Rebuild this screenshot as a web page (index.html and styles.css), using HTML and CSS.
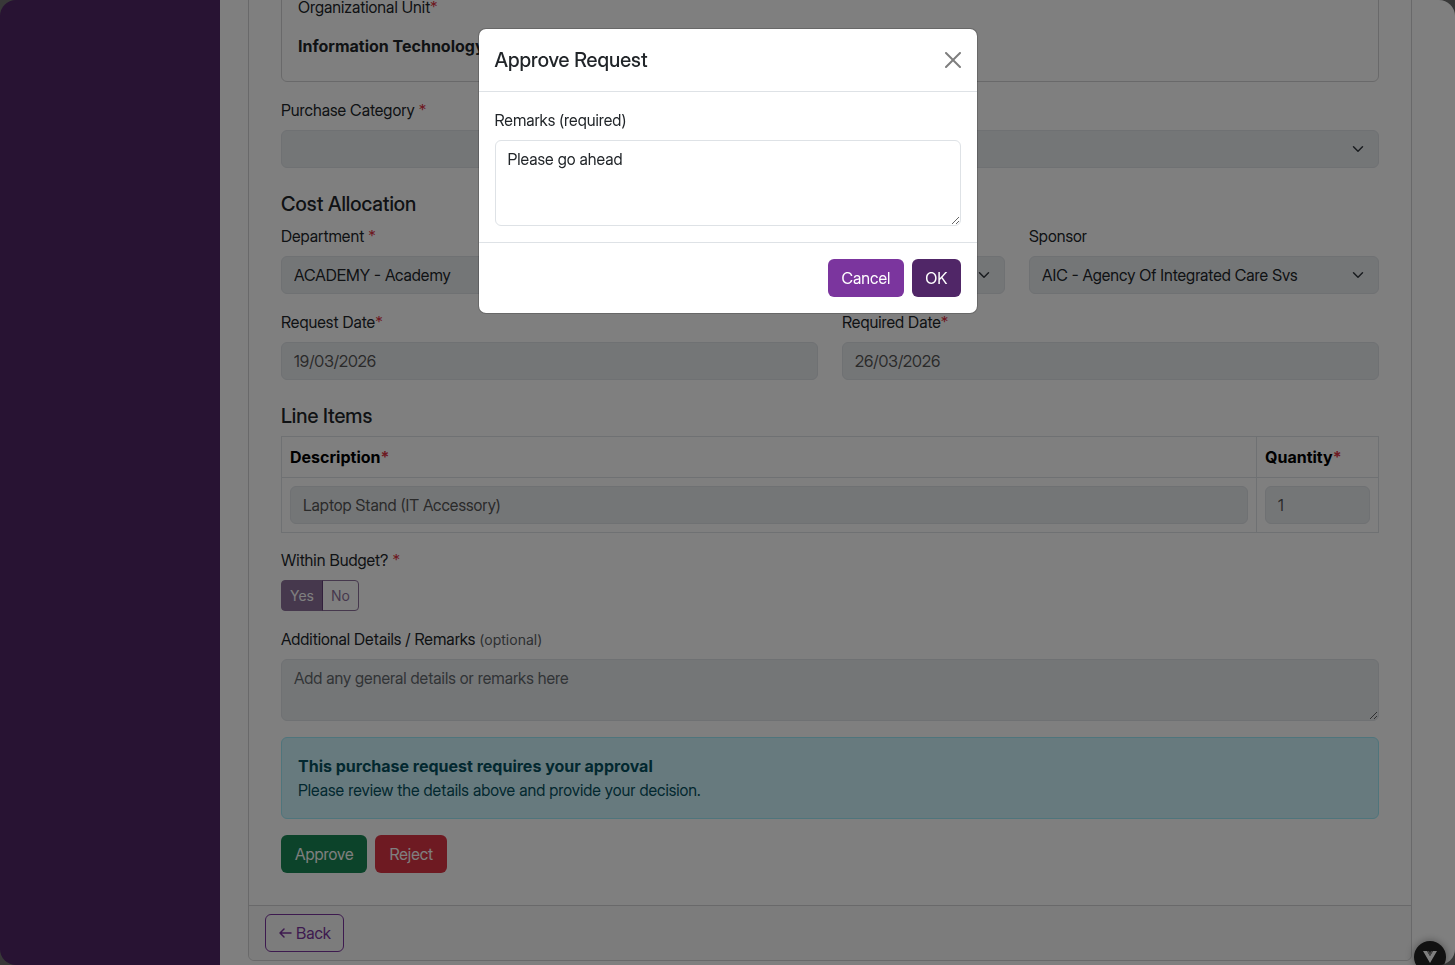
FILE: index.html
```html
<!DOCTYPE html>
<html lang="en">
<head>
    <meta charset="UTF-8">
    <meta name="viewport" content="width=device-width, initial-scale=1.0">
    <title>Purchase Request</title>
    <link rel="stylesheet" href="styles.css">
</head>
<body>
    <div class="layout">
        <aside class="sidebar"></aside>

        <main class="content">
            <div class="card">
                <form class="card-body">
                    <div class="panel">
                        <div class="label">Organizational Unit<span class="req">*</span></div>
                        <div class="plaintext">Information Technology</div>
                    </div>

                    <div class="field">
                        <label for="category">Purchase Category <span class="req">*</span></label>
                        <select id="category" class="control" disabled><option></option></select>
                    </div>

                    <h2>Cost Allocation</h2>
                    <div class="row three">
                        <div class="field">
                            <label for="department">Department <span class="req">*</span></label>
                            <select id="department" class="control" disabled><option>ACADEMY - Academy</option></select>
                        </div>
                        <div class="field">
                            <label for="costCentre">Cost Centre <span class="req">*</span></label>
                            <select id="costCentre" class="control" disabled><option></option></select>
                        </div>
                        <div class="field">
                            <label for="sponsor">Sponsor</label>
                            <select id="sponsor" class="control" disabled><option>AIC - Agency Of Integrated Care Svs</option></select>
                        </div>
                    </div>
                    <div class="row two">
                        <div class="field">
                            <label for="requestDate">Request Date<span class="req">*</span></label>
                            <input type="text" id="requestDate" class="control" value="19/03/2026" disabled>
                        </div>
                        <div class="field">
                            <label for="requiredDate">Required Date<span class="req">*</span></label>
                            <input type="text" id="requiredDate" class="control" value="26/03/2026" disabled>
                        </div>
                    </div>

                    <h2>Line Items</h2>
                    <table class="items">
                        <thead>
                            <tr>
                                <th>Description<span class="req">*</span></th>
                                <th class="qty">Quantity<span class="req">*</span></th>
                            </tr>
                        </thead>
                        <tbody>
                            <tr>
                                <td><input type="text" class="control" aria-label="Description" value="Laptop Stand (IT Accessory)" disabled></td>
                                <td><input type="text" class="control" aria-label="Quantity" value="1" disabled></td>
                            </tr>
                        </tbody>
                    </table>

                    <div class="field">
                        <div class="label">Within Budget? <span class="req">*</span></div>
                        <div class="toggle">
                            <input type="radio" name="budget" id="budgetYes" checked disabled>
                            <label for="budgetYes">Yes</label>
                            <input type="radio" name="budget" id="budgetNo" disabled>
                            <label for="budgetNo">No</label>
                        </div>
                    </div>

                    <div class="field">
                        <label for="details">Additional Details / Remarks <small>(optional)</small></label>
                        <textarea id="details" class="control" rows="2" placeholder="Add any general details or remarks here" disabled></textarea>
                    </div>

                    <div class="alert">
                        <strong>This purchase request requires your approval</strong><br>
                        Please review the details above and provide your decision.
                    </div>

                    <div class="actions">
                        <button type="button" class="btn btn-success">Approve</button>
                        <button type="button" class="btn btn-danger">Reject</button>
                    </div>
                </form>
                <div class="card-footer">
                    <a href="#" class="btn btn-outline">
                        <svg width="16" height="16" viewBox="0 0 16 16" fill="none" stroke="currentColor" stroke-linecap="round" stroke-linejoin="round" stroke-width="1.5"><path d="M13 8H2M6 4L2 8L6 12"/></svg>
                        Back
                    </a>
                </div>
            </div>
        </main>
    </div>

    <button type="button" class="devtools" aria-label="Toggle devtools">
        <svg width="16" height="14" viewBox="0 0 16 14"><path fill="#fff" d="M1 1h4l3 5 3-5h4L8 13z"/><path fill="#888" d="M5 1h2l1 2 1-2h2L8 6z"/></svg>
    </button>

    <!-- Approve dialog -->
    <div class="backdrop">
        <div class="modal" role="dialog" aria-labelledby="modalTitle">
            <div class="modal-header">
                <h1 id="modalTitle">Approve Request</h1>
                <button type="button" class="close" aria-label="Close">
                    <svg width="16" height="16" viewBox="0 0 16 16"><path d="M.293.293a1 1 0 0 1 1.414 0L8 6.586 14.293.293a1 1 0 1 1 1.414 1.414L9.414 8l6.293 6.293a1 1 0 0 1-1.414 1.414L8 9.414l-6.293 6.293a1 1 0 0 1-1.414-1.414L6.586 8 .293 1.707a1 1 0 0 1 0-1.414"/></svg>
                </button>
            </div>
            <div class="modal-body">
                <label for="remarks">Remarks (required)</label>
                <textarea id="remarks" class="control" rows="3">Please go ahead</textarea>
            </div>
            <div class="modal-footer">
                <button type="button" class="btn btn-secondary">Cancel</button>
                <button type="button" class="btn btn-primary">OK</button>
            </div>
        </div>
    </div>

    <div class="window-frame"></div>
</body>
</html>
```
FILE: styles.css
```css
* {
    box-sizing: border-box;
}

body {
    margin: 0;
    font-family: "Inter Display", Inter, "Liberation Sans", sans-serif;
    font-size: 16px;
    line-height: 24px;
    color: #212529;
    background: #fff;
    overflow: hidden;
}

.layout {
    display: flex;
    height: 100vh;
}

.sidebar {
    flex: 0 0 220px;
    background: #502667;
}

/* scrolled to the end of the form */
.content {
    flex: 1;
    display: flex;
    flex-direction: column;
    justify-content: flex-end;
    padding: 0 43px 4px 28px;
}

.card {
    border: 1px solid #d3d3d4;
    border-radius: 6px;
}

.card-body {
    padding: 32px;
}

.card-footer {
    padding: 8px 16px;
    border-top: 1px solid #d3d3d4;
    background: #f8f8f8;
    border-radius: 0 0 6px 6px;
}

.panel {
    padding: 16px;
    margin-bottom: 16px;
    border: 1px solid #d3d3d4;
    border-radius: 6px;
}

/* the text cut is easier to read in bold and small sizes */
.plaintext,
.items th,
.toggle,
strong,
small {
    font-family: Inter, "Liberation Sans", sans-serif;
}

.plaintext {
    padding: 7px 0;
    font-weight: 700;
}

.field {
    margin-bottom: 16px;
}

label,
.label {
    display: block;
    margin-bottom: 8px;
}

small {
    font-size: 14px;
    line-height: 1;
    color: #5b6065;
}

.req {
    color: #dc3545;
}

h2 {
    margin: 24px 0 8px;
    font-size: 20px;
    font-weight: 500;
    line-height: 24px;
}

.row {
    display: grid;
    column-gap: 24px;
    margin-bottom: 16px;
}

.row .field {
    margin-bottom: 0;
}

.three {
    grid-template-columns: repeat(3, 1fr);
}

.two {
    grid-template-columns: repeat(2, 1fr);
}

.control {
    display: block;
    width: 100%;
    padding: 6px 12px;
    border: 1px solid #dee2e6;
    border-radius: 6px;
    background: #fff;
    font: inherit;
    color: #212529;
}

.control:disabled {
    background-color: #e9ecef;
    color: #555;
    opacity: 1;
}

.control::placeholder {
    color: #63686d;
}

select.control,
select.control:disabled {
    height: 38px;
    appearance: none;
    color: #212529;
    background-image: url("data:image/svg+xml,%3csvg xmlns='http://www.w3.org/2000/svg' viewBox='0 0 16 16'%3e%3cpath fill='none' stroke='%23343a40' stroke-linecap='round' stroke-linejoin='round' stroke-width='2' d='m2 5 6 6 6-6'/%3e%3c/svg%3e");
    background-repeat: no-repeat;
    background-position: right 13px center;
    background-size: 14px 12px;
}

textarea.control {
    resize: vertical;
}

.items {
    width: 100%;
    margin-bottom: 15px;
    border-collapse: collapse;
}

.items th,
.items td {
    padding: 8px;
    border: 1px solid #dee2e6;
    text-align: left;
}

.items td {
    font-family: "Inter Display", Inter, "Liberation Sans", sans-serif;
}

.items th {
    color: #000;
    font-weight: 700;
}

.items .qty {
    width: 122px;
}

.toggle {
    display: flex;
}

.toggle input {
    position: absolute;
    opacity: 0;
}

.toggle label {
    margin: 0;
    padding: 4px 8px;
    border: 1px solid #502667;
    border-radius: 0 4px 4px 0;
    font-size: 14px;
    line-height: 21px;
    color: #502667;
    opacity: 0.65;
}

.toggle input:checked + label {
    margin-right: -1px;
    border-radius: 4px 0 0 4px;
    background: #502667;
    color: #fff;
}

.alert {
    margin-bottom: 16px;
    padding: 16px;
    border: 1px solid #9eeaf9;
    border-radius: 6px;
    background: #cff4fc;
    color: #055160;
}

.actions,
.modal-footer {
    display: flex;
    gap: 8px;
}

.btn {
    display: inline-block;
    padding: 6px 13px;
    border: 1px solid transparent;
    border-radius: 6px;
    font: inherit;
    color: #fff;
    text-decoration: none;
    cursor: pointer;
}

.btn-success {
    background: #198754;
}

.btn-danger {
    background: #dc3545;
}

.btn-primary {
    background: #502667;
    padding: 6px 12px;
}

.btn-secondary {
    background: #7b359e;
}

.btn-outline {
    display: inline-flex;
    align-items: center;
    gap: 2px;
    padding: 6px 12px;
    border-color: #7b359e;
    color: #7b359e;
}

.devtools {
    position: fixed;
    right: 9px;
    bottom: -8px;
    width: 32px;
    height: 32px;
    padding: 0;
    border: 0;
    border-radius: 50%;
    background: #222;
    box-shadow: 0 0 8px rgba(0, 0, 0, 0.4);
}

.devtools svg {
    display: block;
    margin: 0 auto;
}

.backdrop {
    position: fixed;
    inset: 0;
    display: flex;
    justify-content: center;
    align-items: flex-start;
    padding-top: 28px;
    background: rgba(0, 0, 0, 0.5);
}

.modal {
    width: 500px;
    border: 1px solid rgba(0, 0, 0, 0.18);
    border-radius: 8px;
    background: #fff;
    background-clip: padding-box;
}

.modal-header {
    display: flex;
    justify-content: space-between;
    align-items: center;
    padding: 16px;
    border-bottom: 1px solid #dee2e6;
}

.modal-header h1 {
    margin: 0;
    font-size: 20px;
    font-weight: 500;
    line-height: 30px;
}

.close {
    padding: 0;
    border: 0;
    background: none;
    opacity: 0.5;
}

.close svg {
    display: block;
}

.modal-body {
    padding: 16px;
}

.modal-footer {
    justify-content: flex-end;
    padding: 16px;
    border-top: 1px solid #dee2e6;
}

/* rounded corners of the app window */
.window-frame {
    position: fixed;
    inset: 0;
    border-radius: 16px;
    box-shadow: 0 0 0 16px #383838;
    pointer-events: none;
}
```
